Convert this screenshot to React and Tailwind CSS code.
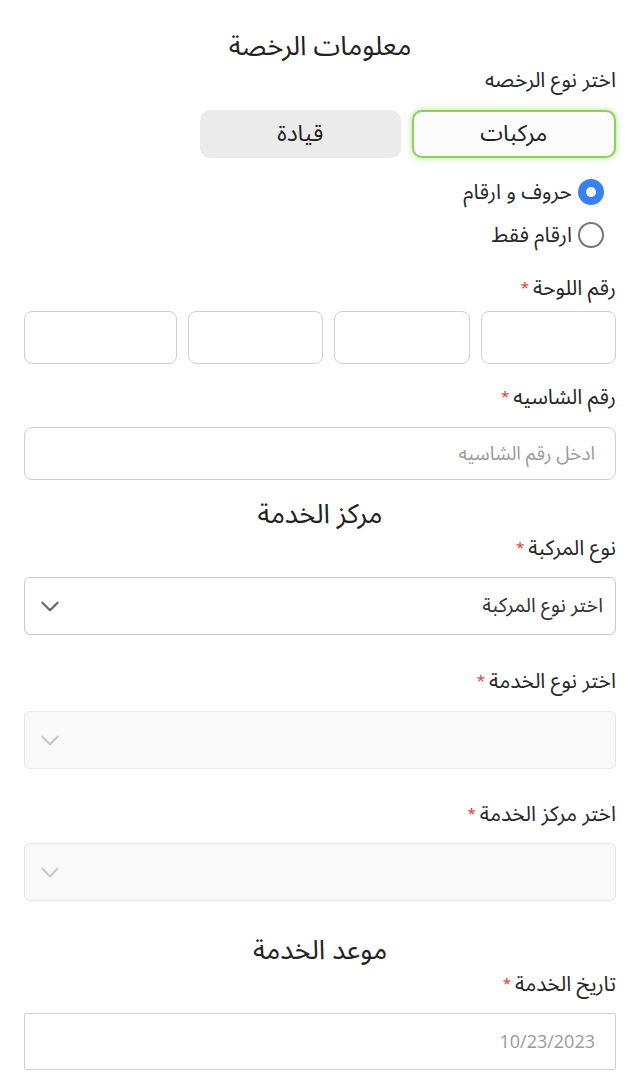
import React, { useState } from 'react';

const font = { fontFamily: '"Noto Sans Arabic", "Noto Kufi Arabic", "DejaVu Sans", sans-serif' };

const Label = ({ children, required }) => (
  <div className="text-[21px] text-[#262626] leading-[28px]">
    {children}
    {required && <span className="text-[#e53935] text-[15px] mr-1 align-top">*</span>}
  </div>
);

const Title = ({ children, className = '' }) => (
  <h2 className={`text-center text-[27px] font-normal text-[#222] tracking-wide leading-[34px] ${className}`}>{children}</h2>
);

const Chevron = ({ light }) => (
  <svg width="26" height="26" viewBox="0 0 24 24" fill="none" stroke={light ? '#c8c8c8' : '#666'} strokeWidth="2" strokeLinecap="round" strokeLinejoin="round">
    <path d="M5 9l7 7 7-7" />
  </svg>
);

const Select = ({ placeholder, disabled }) => (
  <div
    className={`h-[58px] rounded-md border flex items-center justify-between pr-3 pl-3 ${disabled ? 'bg-[#f9f9f9] border-[#e6e6e6]' : 'bg-white border-[#c9c9c9]'}`}
  >
    <span className="text-[20px] text-[#333] leading-[28px]">{placeholder}</span>
    <Chevron light={disabled} />
  </div>
);

export default function App() {
  const [tab, setTab] = useState('vehicles');
  const [plate, setPlate] = useState('mixed');

  return (
    <div dir="rtl" className="bg-white w-[640px] min-h-[1088px] px-6 pt-[30px]" style={font}>
      <Title>معلومات الرخصة</Title>
      <div className="mt-[2px]">
        <Label>اختر نوع الرخصه</Label>
      </div>

      {/* license type tabs */}
      <div className="flex gap-[11px] mt-[16px] pl-[176px]">
        <button
          className={`flex-1 h-[48px] rounded-[10px] text-[23px] text-[#222] ${tab === 'vehicles' ? 'bg-[#fcfcfd] border-2 border-[#8fcf5e] shadow-[0_0_6px_rgba(120,200,70,0.6)]' : 'bg-[#ebebeb]'}`}
          onClick={() => setTab('vehicles')}
        >
          مركبات
        </button>
        <button
          className={`flex-1 h-[48px] rounded-[10px] text-[23px] text-[#222] ${tab === 'driving' ? 'bg-[#fcfcfd] border-2 border-[#8fcf5e] shadow-[0_0_6px_rgba(120,200,70,0.6)]' : 'bg-[#ebebeb]'}`}
          onClick={() => setTab('driving')}
        >
          قيادة
        </button>
      </div>

      {/* plate type radios */}
      <div className="flex flex-col gap-[15px] mt-[20px] pr-[12px]">
        {[
          { key: 'mixed', label: 'حروف و ارقام' },
          { key: 'numbers', label: 'ارقام فقط' },
        ].map(o => (
          <label key={o.key} className="flex items-center gap-[6px] h-[28px] cursor-pointer" onClick={() => setPlate(o.key)}>
            {plate === o.key ? (
              <span className="w-[26px] h-[26px] rounded-full bg-[#3b80f2] flex items-center justify-center">
                <span className="w-[10px] h-[10px] rounded-full bg-white" />
              </span>
            ) : (
              <span className="w-[26px] h-[26px] rounded-full border-2 border-[#767676] bg-white" />
            )}
            <span className="text-[21px] text-[#262626] leading-[28px]">{o.label}</span>
          </label>
        ))}
      </div>

      <div className="mt-[25px]">
        <Label required>رقم اللوحة</Label>
      </div>
      <div className="grid grid-cols-[135px_136px_135px_1fr] gap-[11px] mt-[9px]">
        {[0, 1, 2, 3].map(i => (
          <input key={i} className="min-w-0 w-full h-[53px] rounded-lg border border-[#d0d0d0] bg-white outline-none" />
        ))}
      </div>

      <div className="mt-[19px]">
        <Label required>رقم الشاسيه</Label>
      </div>
      <input
        placeholder="ادخل رقم الشاسيه"
        className="mt-[16px] w-full h-[53px] rounded-lg border border-[#d0d0d0] px-5 text-[19px] placeholder:text-[#9a9a9a] outline-none"
        style={font}
      />

      <Title className="mt-[18px]">مركز الخدمة</Title>
      <div className="mt-[2px]">
        <Label required>نوع المركبة</Label>
      </div>
      <div className="mt-[15px]">
        <Select placeholder="اختر نوع المركبة" />
      </div>

      <div className="mt-[32px]">
        <Label required>اختر نوع الخدمة</Label>
      </div>
      <div className="mt-[16px]">
        <Select disabled />
      </div>

      <div className="mt-[31px]">
        <Label required>اختر مركز الخدمة</Label>
      </div>
      <div className="mt-[15px]">
        <Select disabled />
      </div>

      <Title className="mt-[33px]">موعد الخدمة</Title>
      <div className="mt-[2px]">
        <Label required>تاريخ الخدمة</Label>
      </div>
      <div className="mt-[15px] h-[57px] border border-[#cfcfcf] rounded-[2px] flex items-center pr-5">
        <span className="text-[18px] text-[#9a9a9a]" style={{ fontFamily: '"Open Sans", sans-serif' }}>10/23/2023</span>
      </div>
    </div>
  );
}
